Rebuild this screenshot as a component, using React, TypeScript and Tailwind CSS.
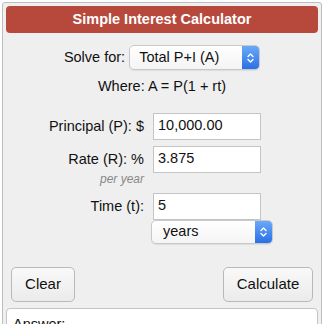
import React from "react"

function Stepper() {
  return (
    <div className="flex h-full w-[17px] items-center justify-center rounded-r-[4px] bg-gradient-to-b from-[#6aa9f7] to-[#2a6fe6]">
      <svg width="7" height="12" viewBox="0 0 7 12" fill="none" stroke="white" strokeWidth="1.4" strokeLinecap="round" strokeLinejoin="round">
        <path d="M1 4.5 L3.5 2 L6 4.5" />
        <path d="M1 7.5 L3.5 10 L6 7.5" />
      </svg>
    </div>
  )
}

function Select({ value, className }: { value: string; className: string }) {
  return (
    <div
      className={`flex items-center justify-between rounded-[5px] border border-[#c9c9c9] bg-gradient-to-b from-white to-[#f4f4f4] shadow-[0_1px_1px_rgba(0,0,0,0.08)] ${className}`}
    >
      <span className="text-[14.5px] text-[#111]">{value}</span>
      <Stepper />
    </div>
  )
}

function Field({ label, value, note }: { label: string; value: string; note?: string }) {
  return (
    <div className="flex items-start">
      <div className="w-[141px] pr-[3px] text-right">
        <div className="h-[27px] text-[14.5px] leading-[27px] text-[#111]">{label}</div>
        {note && <div className="-mt-[1px] text-[12px] italic leading-[15px] text-[#888]">{note}</div>}
      </div>
      <div className="ml-[6px] flex h-[27px] w-[108px] items-center border border-[#c4c4c4] bg-white pl-[4px] text-[14.5px] text-[#111]">
        {value}
      </div>
    </div>
  )
}

export default function App() {
  return (
    <div className="h-[324px] w-[324px] overflow-hidden bg-white pl-[2px] pt-[2px] font-['Liberation_Sans',Arial,sans-serif]">
      <div className="h-[330px] w-[320px] rounded-t-[3px] border border-[#bdbdbd] bg-[#efefef] px-[3px] pt-[3px]">
        <div className="flex h-[27px] items-center justify-center rounded-[4px] bg-[#b7493c] text-[14.5px] font-bold text-white">
          Simple Interest Calculator
        </div>

        <div className="mt-[12px] flex items-center justify-center">
          <span className="text-[14.5px] text-[#111]">Solve for:</span>
          <Select value="Total P+I (A)" className="ml-[4px] h-[25px] w-[131px] pl-[9px]" />
        </div>

        <div className="mt-[6px] text-center text-[14.5px] text-[#111]">Where: A = P(1 + rt)</div>

        <div className="mt-[15px] flex flex-col gap-[6px]">
          <Field label="Principal (P): $" value="10,000.00" />
          <Field label="Rate (R): %" value="3.875" note="per year" />
          <Field label="Time (t):" value="5" />
        </div>
        <div className="flex pl-[145px]">
          <Select value="years" className="h-[24px] w-[122px] pl-[11px]" />
        </div>

        <div className="mt-[23px] flex items-center justify-between px-[5px]">
          <button className="h-[35px] w-[64px] rounded-[5px] border border-[#b9b9b9] bg-gradient-to-b from-[#f9f9f9] to-[#ebebeb] text-[15px] text-[#111]">
            Clear
          </button>
          <button className="h-[35px] w-[90px] rounded-[5px] border border-[#b9b9b9] bg-gradient-to-b from-[#f9f9f9] to-[#ebebeb] text-[15px] text-[#111]">
            Calculate
          </button>
        </div>

        <div className="mt-[6px] h-[40px] rounded-[4px] border border-[#c4c4c4] bg-white px-[6px] pt-[5px] text-[14.5px] text-[#111]">
          Answer:
        </div>
      </div>
    </div>
  )
}
